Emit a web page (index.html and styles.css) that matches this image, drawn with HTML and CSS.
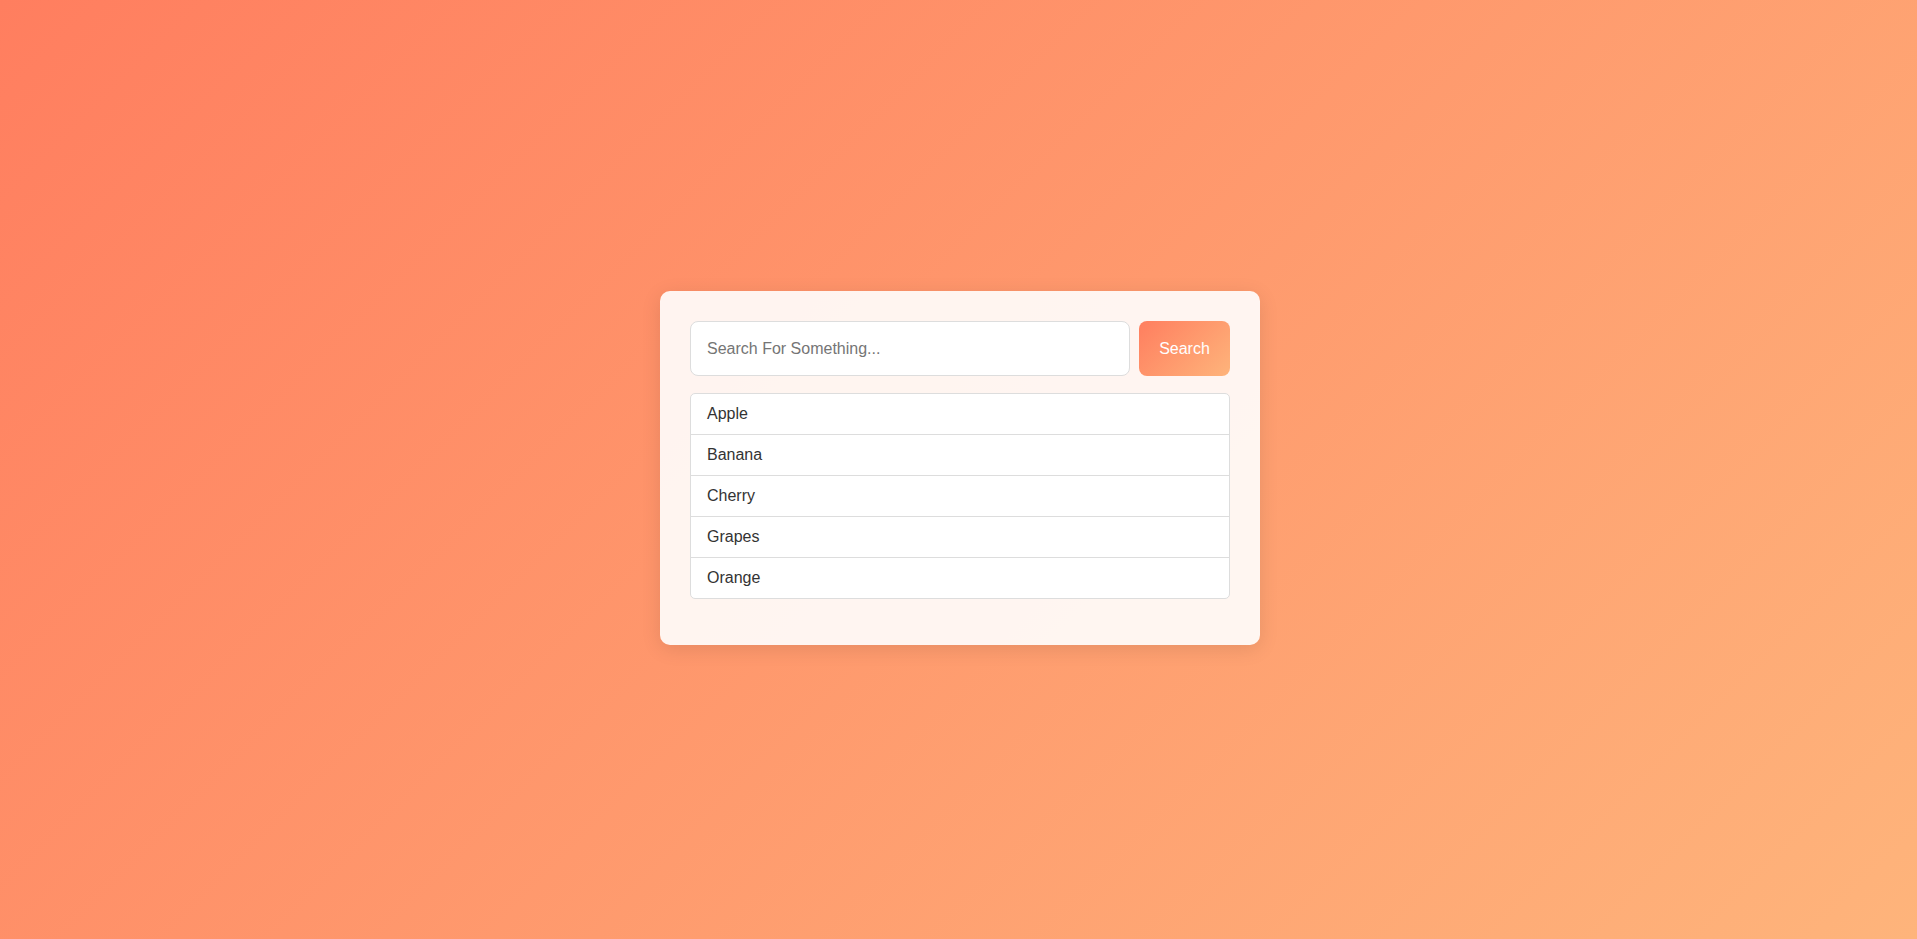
FILE: index.html
```html
<!DOCTYPE html>
<html lang="en">
<head>
<meta charset="utf-8">
<title>Search</title>
<link rel="stylesheet" href="styles.css">
</head>
<body>
  <main class="card">
    <div class="search-row">
      <input class="search-input" type="text" placeholder="Search For Something...">
      <button class="search-btn" type="button">Search</button>
    </div>
    <ul class="results">
      <li class="result">Apple</li>
      <li class="result">Banana</li>
      <li class="result">Cherry</li>
      <li class="result">Grapes</li>
      <li class="result">Orange</li>
    </ul>
  </main>
</body>
</html>
```

FILE: styles.css
```css
* { box-sizing: border-box; }

html, body { height: 100%; }

body {
  margin: 0;
  min-height: 100vh;
  display: flex;
  align-items: center;
  justify-content: center;
  font-family: "Liberation Sans", Arial, sans-serif;
  background: linear-gradient(135deg, #ff7e5f, #feb47b);
}

.card {
  width: 600px;
  padding: 30px 30px 46px;
  background: rgba(255, 255, 255, 0.9);
  border-radius: 10px;
  box-shadow: 0 4px 20px rgba(0, 0, 0, 0.1);
  margin: -3px 0 0 3px;
}

.search-row {
  display: flex;
  gap: 9px;
}

.search-input {
  flex: 1;
  height: 55px;
  padding: 0 16px;
  border: 1px solid #ddd;
  border-radius: 8px;
  background: #fff;
  font-family: inherit;
  font-size: 16px;
  color: #333;
  outline: none;
}

.search-input::placeholder { color: #757575; }

.search-btn {
  width: 91px;
  height: 55px;
  border: none;
  border-radius: 8px;
  background: linear-gradient(135deg, #ff7e5f, #feb47b);
  color: #fff;
  font-family: inherit;
  font-size: 16px;
  cursor: pointer;
}

.results {
  list-style: none;
  margin: 17px 0 0;
  padding: 0;
  border: 1px solid #ddd;
  border-radius: 5px;
  background: #fff;
  overflow: hidden;
}

.result {
  height: 41px;
  display: flex;
  align-items: center;
  padding: 0 16px;
  font-size: 16px;
  color: #333;
  border-bottom: 1px solid #ddd;
}

.result:last-child { border-bottom: none; height: 40px; }
```
